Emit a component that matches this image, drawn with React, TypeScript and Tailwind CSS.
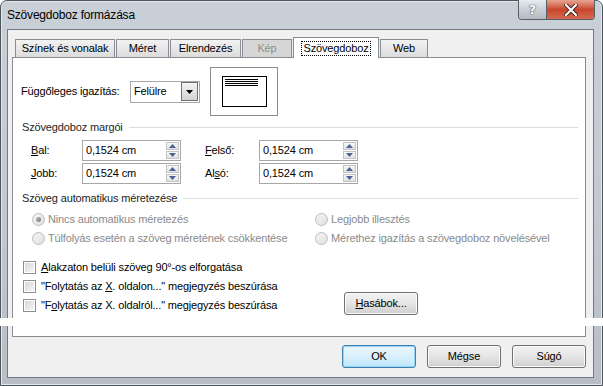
import React from "react";

const U = ({ c }: { c: string }) => <span className="underline underline-offset-[1px]">{c}</span>;

function Spinner() {
  return (
    <div className="ml-auto h-full w-[15px] flex flex-col gap-px p-px">
      <div className="flex-1 flex items-center justify-center border border-[#c2c2c2] bg-gradient-to-b from-[#f7f7f7] to-[#e2e2e2]">
        <svg width="7" height="4" viewBox="0 0 7 4"><path d="M0 4 L3.5 0 L7 4 Z" fill="#4d6291" /></svg>
      </div>
      <div className="flex-1 flex items-center justify-center border border-[#c2c2c2] bg-gradient-to-b from-[#f7f7f7] to-[#e2e2e2]">
        <svg width="7" height="4" viewBox="0 0 7 4"><path d="M0 0 L3.5 4 L7 0 Z" fill="#4d6291" /></svg>
      </div>
    </div>
  );
}

function NumInput() {
  return (
    <div className="w-[99px] h-[21px] border border-[#a7a7a7] bg-white flex items-center">
      <span className="pl-[3px]">0,1524 cm</span>
      <Spinner />
    </div>
  );
}

function Radio({ checked, label }: { checked?: boolean; label: string }) {
  return (
    <div className="flex items-center h-[19px]">
      <div className="w-[13px] h-[13px] rounded-full border border-[#bdbdbd] bg-gradient-to-br from-[#f4f4f4] to-[#e0e0e0] flex items-center justify-center">
        {checked && <div className="w-[5px] h-[5px] rounded-full bg-gradient-to-br from-[#b8b8b8] to-[#7a7a7a]" />}
      </div>
      <span className="ml-[3px] text-[#8a8a8a]">{label}</span>
    </div>
  );
}

function Check({ children }: { children: React.ReactNode }) {
  return (
    <div className="flex items-center h-[18px]">
      <div className="w-[13px] h-[13px] border border-[#8e8f8f] bg-white p-px">
        <div className="w-full h-full bg-gradient-to-br from-[#d8d8d8] to-[#f6f6f6]" />
      </div>
      <span className="ml-[5px]">{children}</span>
    </div>
  );
}

function WinButton({ children, def }: { children: React.ReactNode; def?: boolean }) {
  return (
    <div
      className={
        "w-[74px] h-[23px] rounded-[3px] border flex items-center justify-center " +
        (def
          ? "border-[#3c7fb1] bg-gradient-to-b from-[#eaf6fd] via-[#d9f0fc] to-[#bee6fd] shadow-[inset_0_0_0_1px_#97d4f5]"
          : "border-[#707070] bg-gradient-to-b from-[#f2f2f2] via-[#e5e5e5] to-[#cfcfcf] shadow-[inset_0_0_0_1px_#fbfbfb]")
      }
    >
      {children}
    </div>
  );
}

function Tab({ label, w, active, disabled }: { label: string; w: string; active?: boolean; disabled?: boolean }) {
  if (active) {
    return (
      <div className={"relative z-10 -mb-px h-[21px] border border-b-0 border-[#898c95] bg-white flex items-center justify-center " + w}>
        <span className="border border-dotted border-black px-[1px] leading-[13px]">{label}</span>
      </div>
    );
  }
  return (
    <div
      className={
        "h-[18px] border border-b-0 border-[#898c95] flex items-center justify-center " +
        w +
        (disabled ? " bg-[#d6d6d6] text-[#8d8d8d]" : " bg-gradient-to-b from-[#f3f3f3] to-[#dcdcdc]")
      }
    >
      {label}
    </div>
  );
}

function GroupHeader({ label }: { label: string }) {
  return (
    <div className="flex items-center h-[13px] pr-[7px]">
      <span className="pl-[9px] text-[#1e1e1e]">{label}</span>
      <div className="flex-1 ml-[6px] h-px bg-[#d5dfe5]" />
    </div>
  );
}

export default function App() {
  return (
    <div className="relative w-[603px] h-[386px] overflow-hidden bg-white font-['Liberation_Sans',Arial,sans-serif] text-[11px] tracking-[-0.15px] text-black">
      {/* window frame */}
      <div className="w-full h-full rounded-t-[7px] border border-[#4e565e] bg-gradient-to-b from-[#c9d0d7] via-[#c2c9d0] to-[#b7bec5] flex flex-col pl-[6px] pr-[8px] pb-[7px] shadow-[inset_0_0_0_1px_#e3e7eb]">
        {/* title bar */}
        <div className="relative h-[28px] flex items-center">
          <span className="text-[12px] tracking-[-0.2px]">Szövegdoboz formázása</span>
          <div className="absolute top-[-1px] right-[-1px] flex h-[20px] rounded-b-[4px] border border-t-0 border-[#5a5f66] overflow-hidden">
            <div className="w-[28px] h-full flex items-center justify-center bg-gradient-to-b from-[#e6ebef] via-[#c9d0d6] to-[#b3bac1] border-r border-[#5a5f66]">
              <span className="font-['DejaVu_Sans',sans-serif] font-bold text-[13px] text-white [text-shadow:0_0_1px_#333,0_0_1px_#333]">?</span>
            </div>
            <div className="w-[47px] h-full flex items-center justify-center bg-gradient-to-b from-[#e8a493] via-[#c9462c] to-[#d26a4e]">
              <svg width="14" height="12" viewBox="0 0 14 12">
                <path d="M2 1 L12 11 M12 1 L2 11" stroke="#3a1a12" strokeWidth="4" strokeLinecap="square" />
                <path d="M2 1 L12 11 M12 1 L2 11" stroke="#ffffff" strokeWidth="2.2" strokeLinecap="square" />
              </svg>
            </div>
          </div>
        </div>
        {/* client area */}
        <div className="flex-1 border border-[#6f7a85] bg-[#f0f0f0] flex flex-col pl-[4px] pr-[7px] pt-[6px]">
          {/* tabs */}
          <div className="flex items-end gap-px pl-[3px] h-[21px]">
            <Tab label="Színek és vonalak" w="w-[100px]" />
            <Tab label="Méret" w="w-[53px]" />
            <Tab label="Elrendezés" w="w-[71px]" />
            <Tab label="Kép" w="w-[50px]" disabled />
            <Tab label="Szövegdoboz" w="w-[86px]" active />
            <Tab label="Web" w="w-[48px]" />
          </div>
          {/* panel */}
          <div className="h-[280px] border border-[#898c95] bg-white flex flex-col pt-[9px]">
            <div className="flex items-center h-[49px] pl-[8px]">
              <span className="w-[109px]">Függőleges igazítás:</span>
              <div className="w-[70px] h-[22px] border border-[#a7a7a7] bg-white flex items-center">
                <span className="pl-[3px]">Felülre</span>
                <div className="ml-auto mr-px w-[17px] h-[19px] border border-[#707070] bg-gradient-to-b from-[#f3f3f3] to-[#d3d3d3] flex items-center justify-center">
                  <svg width="7" height="4" viewBox="0 0 7 4"><path d="M0 0 L3.5 4 L7 0 Z" fill="#000" /></svg>
                </div>
              </div>
              <div className="ml-[10px] w-[68px] h-[49px] border border-[#8e8e8e] flex items-center justify-center">
                <div className="w-[45px] h-[31px] border border-black flex flex-col gap-px pt-[2px] px-[2px]">
                  <div className="h-px w-[33px] bg-black" />
                  <div className="h-px w-[33px] bg-black" />
                  <div className="h-px w-[33px] bg-black" />
                  <div className="h-px w-[33px] bg-black" />
                </div>
              </div>
            </div>
            <div className="mt-[5px]">
              <GroupHeader label="Szövegdoboz margói" />
            </div>
            <div className="mt-[6px] grid grid-cols-[51px_99px_78px_99px] gap-y-[2px] pl-[18px] items-center">
              <span><U c="B" />al:</span>
              <NumInput />
              <span className="pl-[24px]"><U c="F" />első:</span>
              <NumInput />
              <span><U c="J" />obb:</span>
              <NumInput />
              <span className="pl-[24px]">Al<U c="s" />ó:</span>
              <NumInput />
            </div>
            <div className="mt-[8px]">
              <GroupHeader label="Szöveg automatikus méretezése" />
            </div>
            <div className="mt-[5px] grid grid-cols-[283px_1fr] pl-[19px]">
              <Radio checked label="Nincs automatikus méretezés" />
              <Radio label="Legjobb illesztés" />
              <Radio label="Túlfolyás esetén a szöveg méretének csökkentése" />
              <Radio label="Mérethez igazítás a szövegdoboz növelésével" />
            </div>
            <div className="mt-[10px] flex items-end pl-[10px]">
              <div className="flex flex-col gap-px w-[321px]">
                <Check><U c="A" />lakzaton belüli szöveg 90°-os elforgatása</Check>
                <Check>"Folytatás az <U c="X" />. oldalon..." megjegyzés beszúrása</Check>
                <Check>"F<U c="o" />lytatás az X. oldalról..." megjegyzés beszúrása</Check>
              </div>
              <div className="mb-[-1px]">
                <WinButton><span><U c="H" />asábok...</span></WinButton>
              </div>
            </div>
          </div>
          {/* buttons */}
          <div className="flex justify-end gap-[11px] mt-[8px]">
            <WinButton def>OK</WinButton>
            <WinButton>Mégse</WinButton>
            <WinButton>Súgó</WinButton>
          </div>
        </div>
      </div>
      {/* white strip artifact */}
      <div className="absolute left-0 top-[318px] w-full h-[8px] bg-white" />
    </div>
  );
}
